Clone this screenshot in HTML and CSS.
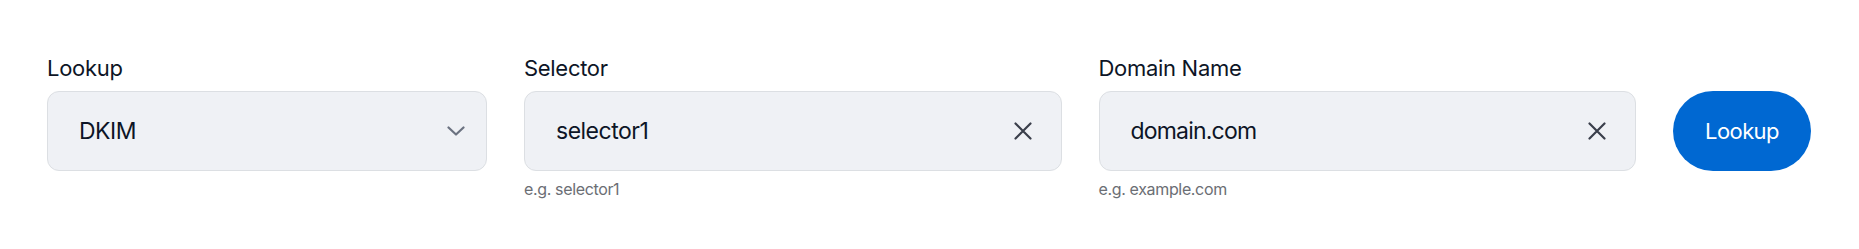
FILE: index.html
```html
<!DOCTYPE html>
<html lang="en">
<head>
<meta charset="utf-8">
<title>DKIM Lookup</title>
<link rel="stylesheet" href="styles.css">
</head>
<body>
<form class="lookup-form">
  <div class="field field-type">
    <label class="field-label" for="type">Lookup</label>
    <div class="control">
      <span class="control-value" id="type">DKIM</span>
      <svg class="icon chevron" width="18" height="10" viewBox="0 0 18 10" aria-hidden="true">
        <path d="M1.5 1.5 L9 8.5 L16.5 1.5" fill="none" stroke="#6b7280" stroke-width="2.2" stroke-linecap="round" stroke-linejoin="round"/>
      </svg>
    </div>
  </div>
  <div class="field field-grow">
    <label class="field-label" for="selector">Selector</label>
    <div class="control">
      <span class="control-value" id="selector">selector1</span>
      <svg class="icon clear" width="18" height="18" viewBox="0 0 18 18" aria-hidden="true">
        <path d="M1.5 1.5 L16.5 16.5 M16.5 1.5 L1.5 16.5" fill="none" stroke="#3a3f4b" stroke-width="2.2" stroke-linecap="round"/>
      </svg>
    </div>
    <div class="field-help">e.g. selector1</div>
  </div>
  <div class="field field-grow">
    <label class="field-label" for="domain">Domain Name</label>
    <div class="control">
      <span class="control-value value-domain" id="domain">domain.com</span>
      <svg class="icon clear" width="18" height="18" viewBox="0 0 18 18" aria-hidden="true">
        <path d="M1.5 1.5 L16.5 16.5 M16.5 1.5 L1.5 16.5" fill="none" stroke="#3a3f4b" stroke-width="2.2" stroke-linecap="round"/>
      </svg>
    </div>
    <div class="field-help">e.g. example.com</div>
  </div>
  <div class="field field-action">
    <button type="button" class="lookup-btn">Lookup</button>
  </div>
</form>
</body>
</html>
```
FILE: styles.css
```css
* { box-sizing: border-box; }
html, body {
  margin: 0;
  background: #ffffff;
}
body {
  font-family: Inter, "Noto Sans", sans-serif;
  color: #0d1526;
}
.lookup-form {
  display: grid;
  grid-template-columns: 440px 1fr 1fr 138px;
  column-gap: 37px;
  padding: 54px 48px 0 47px;
  align-items: start;
}
.field {
  display: flex;
  flex-direction: column;
}
.field-label {
  font-size: 22px;
  line-height: 28px;
  letter-spacing: -0.3px;
  margin-bottom: 9px;
}
.control {
  height: 80px;
  background: #eff1f5;
  border: 1px solid #dcdfe3;
  border-radius: 12px;
  display: flex;
  align-items: center;
  justify-content: space-between;
  padding: 0 29px 0 31px;
}
.field-type .control {
  padding-right: 21px;
}
.control-value {
  font-size: 23px;
  letter-spacing: -0.5px;
  color: #0d1526;
}
.value-domain {
  letter-spacing: -0.8px;
}
.icon { display: block; flex: none; }
.field-help {
  margin-top: 8px;
  font-size: 16px;
  line-height: 20px;
  letter-spacing: -0.35px;
  color: #6b6e74;
}
.field-action {
  padding-top: 37px;
}
.lookup-btn {
  height: 80px;
  width: 138px;
  border: none;
  border-radius: 40px;
  background: #0068d2;
  color: #ffffff;
  font-family: Inter, "Noto Sans", sans-serif;
  font-size: 22px;
  letter-spacing: -0.6px;
  padding: 0;
}
```
